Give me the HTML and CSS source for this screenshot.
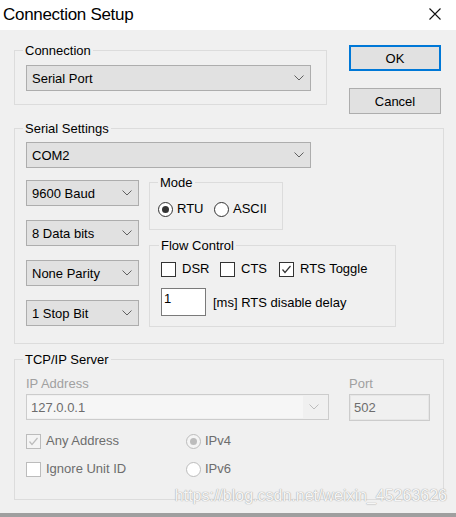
FILE: index.html
```html
<!DOCTYPE html>
<html>
<head>
<meta charset="utf-8">
<title>Connection Setup</title>
<link rel="stylesheet" href="styles.css">
</head>
<body>
<div class="window">
  <div class="titlebar">
    <span class="title">Connection Setup</span>
    <svg class="close" width="12" height="12" viewBox="0 0 12 12"><path d="M0.5 0.5L11.5 11.5M11.5 0.5L0.5 11.5" stroke="#111" stroke-width="1.1" fill="none"/></svg>
  </div>
  <div class="client">
    <div class="top-row">
      <fieldset class="group g-conn">
        <legend>Connection</legend>
        <div class="combo w-wide"><span>Serial Port</span><svg class="chev" width="10" height="6" viewBox="0 0 10 6"><path d="M0.5 0.5L5 5L9.5 0.5" stroke="#606060" fill="none"/></svg></div>
      </fieldset>
      <div class="buttons">
        <div class="btn default">OK</div>
        <div class="btn">Cancel</div>
      </div>
    </div>

    <fieldset class="group g-serial">
      <legend>Serial Settings</legend>
      <div class="combo w-wide"><span>COM2</span><svg class="chev" width="10" height="6" viewBox="0 0 10 6"><path d="M0.5 0.5L5 5L9.5 0.5" stroke="#606060" fill="none"/></svg></div>
      <div class="serial-row">
        <div class="combo-col">
          <div class="combo w-small"><span>9600 Baud</span><svg class="chev" width="10" height="6" viewBox="0 0 10 6"><path d="M0.5 0.5L5 5L9.5 0.5" stroke="#606060" fill="none"/></svg></div>
          <div class="combo w-small"><span>8 Data bits</span><svg class="chev" width="10" height="6" viewBox="0 0 10 6"><path d="M0.5 0.5L5 5L9.5 0.5" stroke="#606060" fill="none"/></svg></div>
          <div class="combo w-small"><span>None Parity</span><svg class="chev" width="10" height="6" viewBox="0 0 10 6"><path d="M0.5 0.5L5 5L9.5 0.5" stroke="#606060" fill="none"/></svg></div>
          <div class="combo w-small"><span>1 Stop Bit</span><svg class="chev" width="10" height="6" viewBox="0 0 10 6"><path d="M0.5 0.5L5 5L9.5 0.5" stroke="#606060" fill="none"/></svg></div>
        </div>
        <div class="opt-col">
          <fieldset class="group g-mode">
            <legend>Mode</legend>
            <div class="opt-row">
              <div class="opt w-56"><span class="radio on"></span><span>RTU</span></div>
              <div class="opt"><span class="radio"></span><span>ASCII</span></div>
            </div>
          </fieldset>
          <fieldset class="group g-flow">
            <legend>Flow Control</legend>
            <div class="opt-row">
              <div class="opt w-59"><span class="check"></span><span class="chk-text">DSR</span></div>
              <div class="opt w-59"><span class="check"></span><span class="chk-text">CTS</span></div>
              <div class="opt"><span class="check"><svg width="13" height="13" viewBox="0 0 13 13"><path d="M2.5 6.5L5 9.5L10.5 3" stroke="#333" stroke-width="1.2" fill="none"/></svg></span><span class="chk-text">RTS Toggle</span></div>
            </div>
            <div class="delay-row">
              <div class="textbox">1</div>
              <span>[ms] RTS disable delay</span>
            </div>
          </fieldset>
        </div>
      </div>
    </fieldset>

    <fieldset class="group g-tcp">
      <legend>TCP/IP Server</legend>
      <div class="tcp-grid">
        <span class="dis-label">IP Address</span>
        <span class="dis-label">Port</span>
        <div class="combo-dis"><span class="edit-area">127.0.0.1</span><svg class="chev" width="10" height="6" viewBox="0 0 10 6"><path d="M0.5 0.5L5 5L9.5 0.5" stroke="#bcbcbc" fill="none"/></svg></div>
        <div class="port-box">502</div>
      </div>
      <div class="tcp-opts">
        <div class="opt dis w-160"><span class="check dis-box"><svg width="13" height="13" viewBox="0 0 13 13"><path d="M2.5 6.5L5 9.5L10.5 3" stroke="#bcbcbc" stroke-width="1.2" fill="none"/></svg></span><span class="chk-text-dis">Any Address</span></div>
        <div class="opt dis"><span class="radio dis-radio on-dis"></span><span class="rad-text-dis">IPv4</span></div>
        <div class="opt dis w-160"><span class="check dis-box white"></span><span class="chk-text-dis">Ignore Unit ID</span></div>
        <div class="opt dis"><span class="radio dis-radio white"></span><span class="rad-text-dis">IPv6</span></div>
      </div>
    </fieldset>
  </div>
  <div class="bottom-strip"></div>
  <div class="watermark">https://blog.csdn.net/weixin_45263626</div>
</div>
</body>
</html>
```
FILE: styles.css
```css
* { box-sizing: border-box; }

html, body {
  margin: 0;
  padding: 0;
  background: #f0f0f0;
}

body {
  font-family: "Liberation Sans", Arial, sans-serif;
  font-size: 13px;
  color: #000;
}

.window {
  position: relative;
  width: 456px;
  height: 517px;
  display: flex;
  flex-direction: column;
  overflow: hidden;
}

.titlebar {
  height: 30px;
  flex: none;
  background: #fff;
  display: flex;
  align-items: center;
  justify-content: space-between;
  padding: 0 15px 0 3px;
}

.title {
  font-size: 17px;
  letter-spacing: -0.3px;
  line-height: 30px;
  padding-bottom: 1px;
  color: #000;
}

.close {
  display: block;
  margin-bottom: 2px;
}

.client {
  flex: 1;
  background: #f0f0f0;
  padding: 13px 0 0 14px;
}

.bottom-strip {
  height: 4px;
  flex: none;
  background: #9f9f9f;
}

/* group boxes */
.group {
  margin: 0;
  border: 1px solid #dcdcdc;
  min-width: 0;
}

.group legend {
  padding: 0 2px;
  font-size: 13px;
  line-height: 15px;
}

.top-row {
  display: flex;
  align-items: flex-start;
}

.g-conn {
  width: 313px;
  padding: 7px 15px 13px 11px;
}

.g-conn legend { margin-left: -3px; }

.buttons {
  margin-left: 22px;
  margin-top: 2px;
  display: flex;
  flex-direction: column;
  gap: 17px;
}

.btn {
  width: 92px;
  height: 26px;
  background: #e1e1e1;
  border: 1px solid #adadad;
  display: flex;
  align-items: center;
  justify-content: center;
  font-size: 13px;
}

.btn.default {
  border: 2px solid #0078d7;
}

/* combos */
.combo {
  height: 26px;
  background: #e1e1e1;
  border: 1px solid #adadad;
  display: flex;
  align-items: center;
  justify-content: space-between;
  padding: 0 6px 0 5px;
}

.chev { display: block; flex: none; }

.w-wide { width: 285px; }
.w-small { width: 113px; }

.g-serial {
  width: 430px;
  margin-top: 7px;
  padding: 6px 15px 16px 11px;
}

.g-serial legend { margin-left: -3px; }

.serial-row {
  display: flex;
  align-items: flex-start;
  margin-top: 7px;
}

.combo-col {
  display: flex;
  flex-direction: column;
  gap: 14px;
  padding-top: 5px;
}

.opt-col {
  margin-left: 10px;
  display: flex;
  flex-direction: column;
  gap: 8px;
}

.g-mode {
  width: 134px;
  padding: 11px 4px 12px 8px;
}

.g-mode legend { margin-left: 0; }

.g-flow {
  width: 247px;
  padding: 8px 4px 10px 11px;
}

.g-flow legend { margin-left: -2px; }

.opt-row {
  display: flex;
  align-items: center;
  height: 16px;
}

.opt {
  display: flex;
  align-items: center;
  height: 16px;
  line-height: 16px;
  white-space: nowrap;
}

.w-56 { width: 56px; }
.w-59 { width: 59px; }
.w-160 { width: 160px; }

.radio {
  width: 15px;
  height: 15px;
  border: 1px solid #333;
  border-radius: 50%;
  background: #fff;
  margin-right: 4px;
  display: flex;
  align-items: center;
  justify-content: center;
  flex: none;
}

.radio.on::after {
  content: "";
  width: 7px;
  height: 7px;
  border-radius: 50%;
  background: #333;
}

.check {
  width: 15px;
  height: 15px;
  border: 1px solid #333;
  background: #fff;
  flex: none;
  display: flex;
  align-items: center;
  justify-content: center;
}

.check svg { display: block; }

.chk-text { margin-left: 6px; }

.delay-row {
  display: flex;
  align-items: center;
  margin-top: 11px;
}

.textbox {
  width: 45px;
  height: 28px;
  background: #fff;
  border: 1px solid #7a7a7a;
  padding: 2px 0 0 2px;
  line-height: 16px;
  margin-right: 7px;
}

/* TCP group */
.g-tcp {
  width: 430px;
  margin-top: 8px;
  padding: 9px 15px 22px 11px;
}

.g-tcp legend { margin-left: -3px; }

.tcp-grid {
  display: grid;
  grid-template-columns: 303px 81px;
  column-gap: 20px;
  row-gap: 3px;
}

.dis-label {
  color: #a0a0a0;
  line-height: 15px;
}

.combo-dis {
  height: 26px;
  border: 1px solid #cccccc;
  background: #f0f0f0;
  display: flex;
  align-items: center;
  justify-content: space-between;
  padding: 1px 9px 1px 0;
}

.edit-area {
  width: 276px;
  height: 100%;
  background: #f6f6f6;
  color: #6d6d6d;
  padding-left: 4px;
  display: flex;
  align-items: center;
}

.port-box {
  height: 27px;
  border: 1px solid #cccccc;
  box-shadow: inset 0 0 0 1px #e6e6e6;
  background: #f0f0f0;
  color: #6d6d6d;
  padding-left: 4px;
  display: flex;
  align-items: center;
}

.tcp-opts {
  display: grid;
  grid-template-columns: 160px auto;
  row-gap: 12px;
  margin-top: 12px;
}

.dis-box {
  border-color: #bcbcbc;
  background: #f4f4f4;
}

.dis-box.white { background: #fff; }

.chk-text-dis {
  margin-left: 5px;
  color: #6d6d6d;
}

.dis-radio {
  border-color: #bcbcbc;
  background: #f4f4f4;
}

.dis-radio.white { background: #fff; }

.dis-radio.on-dis::after {
  content: "";
  width: 7px;
  height: 7px;
  border-radius: 50%;
  background: #bcbcbc;
}

.rad-text-dis { color: #6d6d6d; }

.watermark {
  position: absolute;
  right: 9px;
  top: 486px;
  font-size: 16px;
  line-height: 20px;
  color: #f6f6f6;
  text-shadow: 0 0 1px #a8a8a8, 0 0 1px #a8a8a8;
  white-space: nowrap;
}
```
